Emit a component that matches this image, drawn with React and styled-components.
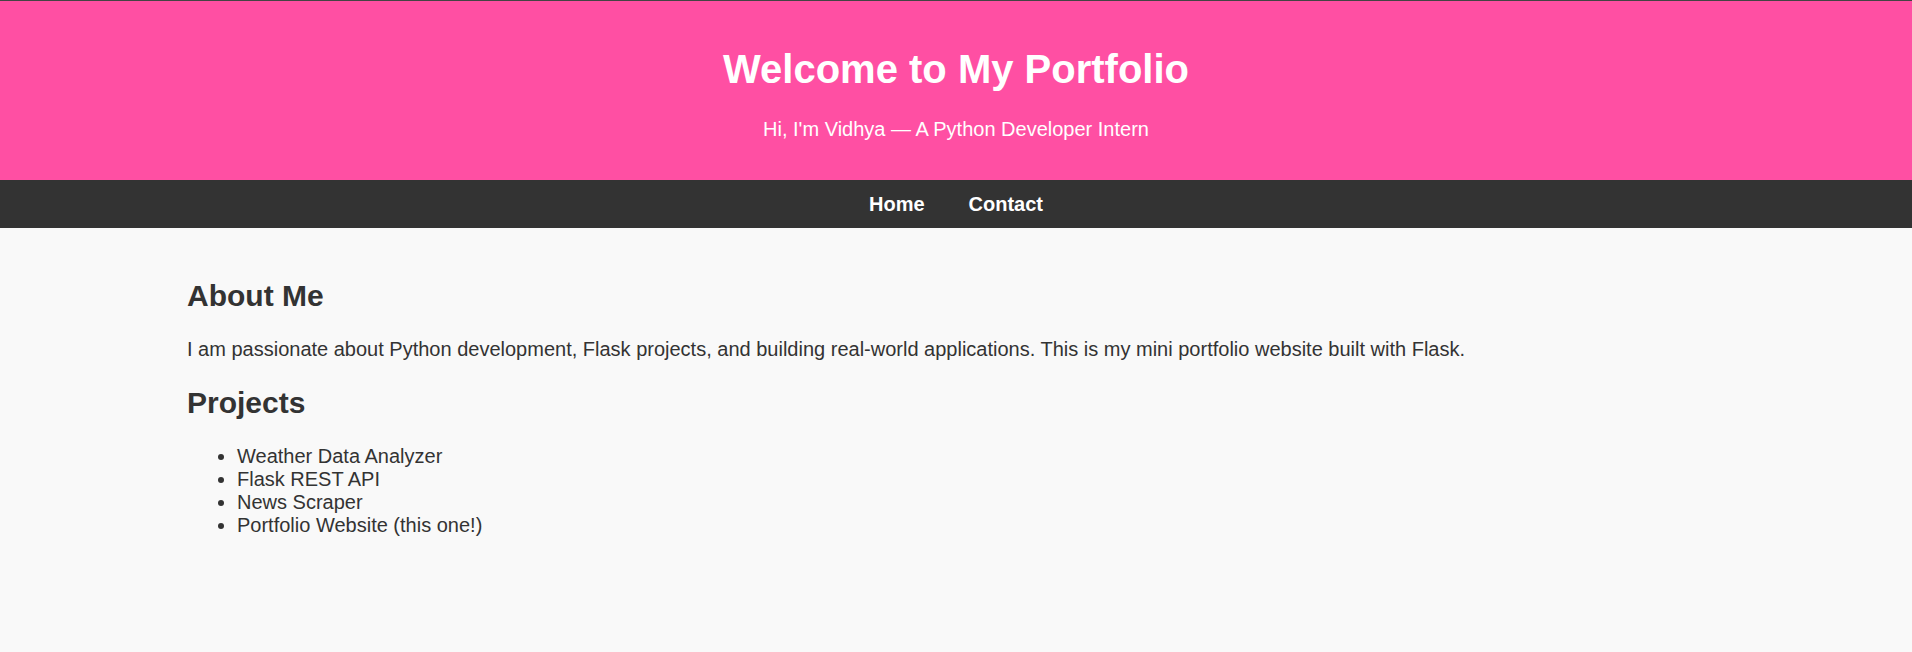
import React from 'react';
import styled, { createGlobalStyle } from 'styled-components';

const GlobalStyle = createGlobalStyle`
    body {
        margin: 0;
        background: #f9f9f9;
        color: #333;
        font-family: "Liberation Sans", Arial, sans-serif;
    }
`;

const Header = styled.header`
    background-color: #ff4fa3;
    border-top: 1px solid #444;
    color: white;
    text-align: center;
    padding: 20px 20px 19px;
`;

const Title = styled.h1`
    font-size: 40px;
    margin: 26px 0;
`;

const Subtitle = styled.p`
    font-size: 20px;
    margin: 20px 0;
`;

const Nav = styled.nav`
    background-color: #333;
    display: flex;
    justify-content: center;
    gap: 44px;
    padding: 12.5px 0;
`;

const NavLink = styled.a`
    color: white;
    font-size: 20px;
    font-weight: bold;
    text-decoration: none;
`;

const Main = styled.main`
    padding: 26px 187px;
`;

const Heading = styled.h2`
    font-size: 30px;
    margin: 25px 0;
`;

const Text = styled.p`
    font-size: 20px;
    margin: 20px 0;
`;

const List = styled.ul`
    font-size: 20px;
    margin: 20px 0;
    padding-left: 50px;
`;

const projects = [
    'Weather Data Analyzer',
    'Flask REST API',
    'News Scraper',
    'Portfolio Website (this one!)',
];

function App() {
    return (
        <>
            <GlobalStyle />
            <Header>
                <Title>Welcome to My Portfolio</Title>
                <Subtitle>Hi, I'm Vidhya — A Python Developer Intern</Subtitle>
            </Header>
            <Nav>
                <NavLink href="#">Home</NavLink>
                <NavLink href="#">Contact</NavLink>
            </Nav>
            <Main>
                <Heading>About Me</Heading>
                <Text>
                    I am passionate about Python development, Flask projects, and building real-world applications. This is my mini portfolio website built with Flask.
                </Text>
                <Heading>Projects</Heading>
                <List>
                    {projects.map(p => <li key={p}>{p}</li>)}
                </List>
            </Main>
        </>
    )
}

export default App;
